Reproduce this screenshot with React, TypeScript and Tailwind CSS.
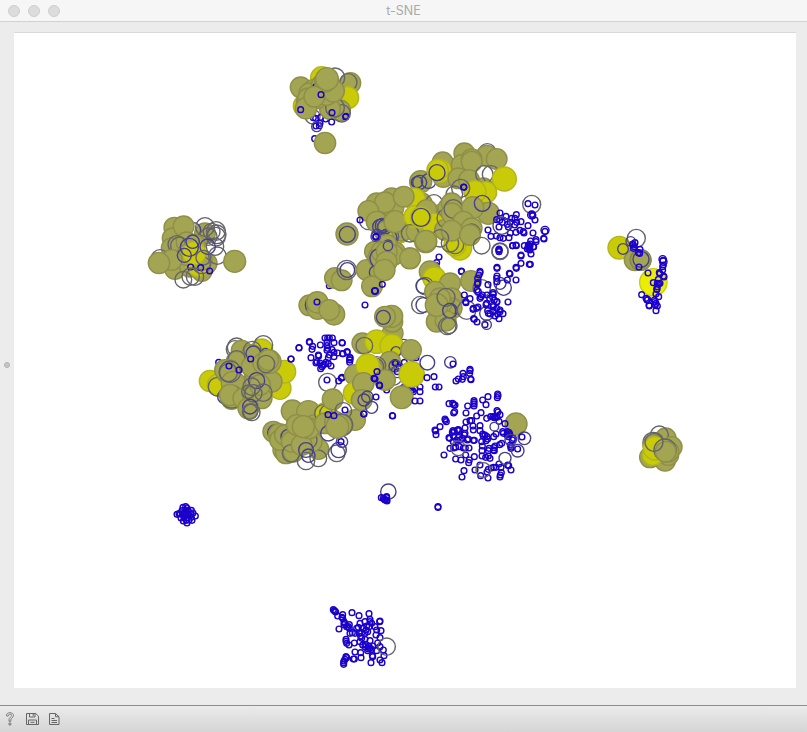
type Kind = 'O' | 'Y' | 'B' | 'g' | 'p' | 'b';

const styles: Record<Kind, { r: number; fill: string; stroke: string }> = {
  O: { r: 31, fill: '#a4a552', stroke: '#8e8f48' },
  Y: { r: 33, fill: '#c9cb08', stroke: '#b2b51c' },
  B: { r: 41, fill: '#ecee00', stroke: '#c9cb18' },
  g: { r: 26, fill: 'none', stroke: '#64646b' },
  p: { r: 22, fill: 'none', stroke: '#45418a' },
  b: { r: 8.6, fill: 'none', stroke: '#1b00cb' },
};

// Each cluster has an origin in canvas pixels; offsets are in thirds of a pixel.
// Every token is "<kind><dx>,<dy>[,<radius>]", painted in order.
const clusters: { x: number; y: number; points: string }[] = [
  { x: 280, y: 55, points: `Y125,68 g98,185,22 b100,188 b107,190 b122,187 b137,192 b120,205 b108,213 b118,212 p110,215,15 b104,251 O211,84 g205,82 g165,68,29 Y203,128 O62,97 Y73,152 O180,166 b197,186 b198,184 g185,175 O150,162 g165,158,28 O100,105 O88,115 O110,130 O80,140 b85,152 O85,130 O120,110 O78,160,32 b62,164 O125,90 O150,95 O140,120 O160,108,33 b108,95 O135,80 O103,125 O141,72,34 b123,119 b156,173 b155,201 O135,264,32` },
  { x: 140, y: 205, points: `O103,68 O195,85 p160,75 g195,66,28 g215,80,25 g228,78,28 g230,88,28 g228,95,28 g205,95 O98,100 O131,64 O95,130 O140,112 g110,118 g118,122 g60,160 O105,192 O150,185 O185,198 O200,175 Y175,182 O185,165 g185,180 g232,152 g225,125 O140,150 O165,120 Y162,145,35 p158,110,20 O95,165 O57,174,32 p148,127,27 p133,151,21 p203,125,23 g190,158,22 b152,186 b182,188 b209,198 g130,224,25 g152,215 g165,215 O284,169,33` },
  { x: 325, y: 135, points: `O66,297,33 p67,298,24 O287,140,33 p276,142,17 p284,142,21 p311,138,22 O290,205 O200,190 O160,215 O205,220 O155,205 O180,202 g130,258 O130,228 Y268,192 O236,185 b105,255 O155,260 O180,290 Y225,290 O240,280 O232,285,33 g195,305 p165,275,22 p173,272 p180,275 p157,300,17 p188,310,28 O210,260,33 O150,350 O175,355 O210,352 O255,370 O185,330 b189,329 p189,329,14 b153,304 b153,306 p152,305,14 O310,235 O275,290 Y270,245 g255,295 Y325,275 Y290,248 p289,247,27 O302,320,33` },
  { x: 420, y: 135, points: `O68,82 O70,126 Y61,108,34 Y53,105,32 p51,113,24 O133,55 g202,52 O200,62 O125,90 O155,73 O115,130 O155,80 O230,72 O190,160 O147,135 g193,118,26 g213,118,26 Y253,132,36 Y198,172,32 Y165,170 g103,178,25 g122,160,27 b131,156 b132,157 O205,235,33 O60,240 g42,205 O20,225 Y42,270,35 Y3,245,30 p3,247,27 O75,285 O85,220 O95,205 g80,250,29 O95,235 g100,222,28 O158,218,33 p187,205,24 O130,260 O155,280 g155,292,25 Y120,340,35 Y105,330 g90,325 g105,330 O95,287 O150,300 g60,310 O18,318,32 g185,332,25 g335,208,27 b324,206 b345,210 b240,234 b258,244 b289,239 b285,250 b275,250 b270,262 b290,262 b303,260 b324,272 b239,256 b230,254 b262,268 b284,270 b247,262 b265,276 b237,276 b204,285 b213,304 b229,303 b240,308 b250,310 b267,308 b271,294 b288,292 b300,286 b310,290 b312,294 b339,294 b375,286,12 b375,289 b371,310 b372,312 b348,314 b332,318 b325,330 b325,336 b340,336 b322,342 b330,345 b278,332 b289,332 b303,360 b336,238 b338,242 b335,240,12 b345,255 p245,272,26 p240,348,24 b237,345 b237,350` },
  { x: 340, y: 325, points: `b193,112 b218,100 b228,98 p190,65 O158,25 O157,-10` },
  { x: 295, y: 245, points: `b103,122 O120,99 O140,106 g155,75,29 p157,75,22 O215,75 O250,37 O260,20 O295,30 p255,40,30 O275,20 O345,40 O275,50 p243,82,20 O231,124 b262,118 O268,75,32 p279,3,14 b240,138 b240,138,10 b210,180 O43,181 p60,180,29 O68,192 O67,172,32 b66,171 O117,208,32 O103,195 O290,214,33 O270,215 p265,217,21` },
  { x: 405, y: 240, points: `g285,35,24 b282,27 b282,31 b102,51 b95,68 b92,76 b169,93 b170,95 b225,94 b225,98 O75,95,32 Y88,115,34 g60,138 p55,138,22 O135,130 O198,123 O90,155 O140,175 g46,195 p55,195 O140,205 O110,190 p130,212 O95,245 O95,195 O105,175 O122,242 O95,195,34 g123,172,27 p135,212,22 g127,258,26 g132,257,24 g185,210,28 p245,220,21 p296,143,23 p285,130,18 g230,145 b276,82 b276,85 b249,134 b218,115 b218,128 b217,132 b216,150 b220,155 b222,105 b276,108 b275,115 b276,125 b307,120 b313,100 b315,102 b333,82 b334,85 b333,120 b348,48 b348,70 b373,73 b376,73 b378,42 b323,17 b333,15 b358,17 b370,20 b375,18 b375,12 b386,20 b393,5 b372,25 b178,165 b182,185 b183,188 b195,176 b205,205 b204,208 b215,205 b219,201 b216,246 b206,236 b208,238 b240,254 p245,254,14 b282,236 b309,186 b276,185 b275,186 b264,158 b265,163 b246,165 b254,175 b232,165 b228,170 b225,175 b245,190 b243,194 b265,195 b265,200 b248,212 b250,220 b255,222 b265,215 b275,205 b285,210 b285,215 b278,222 b270,228 b294,221 b263,172 b268,180` },
  { x: 190, y: 330, points: `Y215,60 g220,45,28 g140,52,28 g135,58 O155,62 b86,97 O185,75 g187,60 p190,70 Y60,153,32 Y85,165 g83,170,28 p105,200 Y270,175 Y283,125,34 O245,155 O140,95 g140,88 O160,170 O115,125,36 O105,120 O195,130 p226,65,10 O185,110 O220,100 O238,95,35 O235,90 g228,102,26 O130,160,36 g115,128,27 g120,125,32 O125,207 g125,200,34 O120,195,32 O160,205 O190,200 O215,205 O210,165 g185,170 O175,235 p200,152,24 g220,188,26 g175,185,20 g190,190,26 p180,230,22 g185,247,25 g180,245,23 b117,108 b147,120 b182,87 b303,87 b327,53` },
  { x: 260, y: 325, points: `b117,69 b148,50 b149,52 b158,64 b156,73 b93,102 b153,98 b175,90 b176,93 b181,60 b195,39 b203,39 b208,39 b217,39 b222,53 b246,53 b201,52 b201,62 b203,70 b201,76 b216,74 b222,82 b233,84 b249,86 b261,80 b222,95 b208,90 b205,98 b270,98 b269,104 b269,112 b171,110 b168,114 b180,114 b193,118 b189,121 b205,116 b213,123 b182,131 b186,125 b198,112 g203,172,27 b201,165 b246,157 b244,160 b236,168 O40,320 p45,322 O58,328,32 O97,258,33 O145,262,35 O70,375 O78,385 O100,380 O60,345 O75,330 p85,335 O175,372 g175,400,25 O95,350 g93,385 O165,300 O155,350 g145,345 O125,360 O148,310 O110,300 Y198,265 g190,265 g205,265 O195,295 p138,375,22 p145,392,20 g138,408,26 O130,305,33 O218,223 O225,290 p205,325,23 g230,385,25 p236,375,23 O285,285 g250,258,25 O245,300 g245,300,33 p246,350,17 b243,350 O232,305,34 b204,269 b222,272 b255,255` },
  { x: 340, y: 325, points: `b7,54 b6,158 b8,86 b22,82 b30,98 b30,105 O67,55 Y110,50,35 Y155,63,35 p168,80,15 g73,62,25 O150,110 g110,122,27 O213,75 b165,113 b167,115 p165,123,18 b172,140 b178,128 p172,140,18 O45,150 O100,135 g105,125 Y83,122,35 b190,188 b205,195 b212,197 b217,195 b225,190 b220,200 b240,186 b240,200 g160,155 b140,195 O135,165 Y43,205 O185,217,34 O70,175,32 O65,225 p72,225,18 p82,215,17 p95,247,18 Y215,148,38 b111,140 b102,160 b105,162 b118,180 b119,182 b108,216 b72,267 b71,267 b157,272 b158,273 p262,113,22 p331,112,17 b339,117 b390,133 b390,137 b369,145 b370,155 b367,163 b392,162 b393,164 b348,168 b355,162 b282,155 b261,158 b286,186 b297,186 b225,228 b240,228 b389,145` },
  { x: 425, y: 380, points: `O273,132,33 b72,71 b83,70 b86,74 b90,75 b89,95 b86,99 b60,117 b61,121 b64,125 b45,140 b30,150 b32,153 b33,164 b147,62 b147,67 b147,72 b147,78 b128,78 b123,99 b173,60 b189,50 b183,74 b218,42 b219,47 b217,53 b168,98 b155,108 b216,92 b219,96 b225,104 b185,115 b197,110 b204,110 b210,110 b208,113 b216,112 b123,126 b135,122 b140,122 b222,124 b240,131 b120,144 b144,138 b165,137 b165,152 b145,150 b84,152 b88,155 b97,150 b100,149 b102,152 b82,157 b72,173 b74,175 b85,168 b101,172 b106,180 b95,180 b118,165 b120,160 b127,180 b130,177 b145,181 b148,181 b112,175 b85,185 b173,162 b175,168 b180,165 b186,170 b188,177 b183,182 b170,185 b172,198 b206,170 b213,162 b233,155 b235,160 b247,155 b252,158 b254,162 b246,165 b250,170 b262,180 b265,175 b256,195 b258,200 b258,205 b230,190 b224,194 b210,198 b207,203 b206,210 b208,212 b192,205 b190,212 b171,212 b171,228 b182,232 b190,228 b195,235 b75,205 b86,204 b92,202 b103,200 b115,204 b121,204 b132,204 b57,225 b92,237 b108,240 b122,225 b133,240 b131,248 b148,230 b117,272 b111,291 b150,270 b165,255 b167,287 b186,276 b190,268 b189,294 b199,264 b206,262 b213,262 b222,252 b228,262 b226,285 b229,278 b225,291 b251,257 b248,255 b258,270 p208,140,13 g100,205,22 p298,175,19 b291,171 p278,212,19 b278,207 p240,235,18 g175,270,22 p257,180,17` },
  { x: 600, y: 220, points: `Y58,83,34 g109,55,27 p92,64,14 O105,120,32 g122,120,31 O122,120,30 p123,118,24 p69,87,16 b105,68 b98,72 b100,75 b103,80 b100,85 b115,98 b119,100 b120,88 b117,141 B160,187 b144,159 b188,118,11 b189,121 b190,125,11 b190,135 b188,140 b188,150 b178,158 b180,161 b191,168 b192,171 b175,178 b160,188 b172,190 b176,192 b180,190 b172,200 b170,208 b171,208 b168,222 b176,230 b125,224 b138,235 b143,238 b141,240 b147,256 b148,258 b163,240 b165,245 b168,250 b166,255 b172,258 b168,272 O197,655 g178,645,27 O215,681 O150,712 O195,722 O205,705 g160,668,31 O160,675 g160,690,29 Y158,705,31 Y165,685,35 O205,695 g195,690,33 O197,695,31 g162,667,27` },
  { x: 320, y: 480, points: `p205,35,23 b184,53 b190,55 b193,58 b200,50 b200,53 b200,60 b201,63 b195,60 b354,80 b354,82 b40,389 b43,392 b45,394 b47,396 b53,408 b68,404 b66,412 b68,415 b57,447 b72,425 b74,430 b72,434 b88,434 b85,440 b88,445 b80,440 b96,398 b117,407 b147,401 b150,418 b180,423 b179,425 b150,425 b135,425 b120,430 b110,445 b115,442 b130,445 b140,438 b147,440 b155,430 b165,440 b170,450 b183,452 b97,458 b90,460 b105,460 b118,460 b125,458 b135,460 b143,455 b138,450 b168,465 b180,473 b150,482 b135,478 b125,475 b122,470 b78,478 b78,484 b80,490 b87,495 b103,489 b120,485 b128,495 b137,493 b135,500 b147,498 b145,507 b143,512 b155,508 b150,505 b158,498 b173,489 b180,500 b190,510 b192,527 b170,512 b180,540 b186,548 b153,548 b157,527 b158,530 b123,533 b105,516 b122,518 b100,537 b103,537 b78,530 b80,533 b75,538 b72,543 b71,548 b71,553 g200,500,26` },
  { x: 170, y: 500, points: `b21,43 b27,41 b39,22 b47,20 b51,24 b36,32 b47,31 b55,33 b64,31 b31,42 b39,44 b46,39 b54,42 b63,42 b69,39 b76,48 b33,54 b42,52 b52,53 b64,52 b40,63 b49,61 b57,60 b51,69 b66,61` },
];

function Scatter() {
  return (
    <svg className="block h-full w-full" viewBox="14 33 782 655" aria-label="t-SNE scatter plot">
      {clusters.map((cluster, i) => (
        <g key={i}>
          {cluster.points.split(' ').map((token, j) => {
            const style = styles[token[0] as Kind];
            const [dx, dy, r = style.r] = token.slice(1).split(',').map(Number);
            return (
              <circle
                key={j}
                cx={cluster.x + dx / 3}
                cy={cluster.y + dy / 3}
                r={r / 3}
                fill={style.fill}
                stroke={style.stroke}
                strokeWidth={1.4}
              />
            );
          })}
        </g>
      ))}
    </svg>
  );
}

export default function App() {
  return (
    <div className="flex h-[732px] w-[807px] flex-col overflow-hidden bg-[#ececec] font-['Inter','Liberation_Sans',sans-serif]">
      <header className="grid h-[22px] shrink-0 grid-cols-[1fr_auto_1fr] items-center border-b border-[#d1d1d1] bg-[#f6f6f6]">
        <div className="flex gap-2 pl-2">
          <i className="size-3 rounded-full border border-[#cecece] bg-[#dcdcdc]" />
          <i className="size-3 rounded-full border border-[#cecece] bg-[#dcdcdc]" />
          <i className="size-3 rounded-full border border-[#cecece] bg-[#dcdcdc]" />
        </div>
        <h1 className="pt-px text-[12.5px] leading-5 text-[#aaaaaa]">t-SNE</h1>
      </header>
      <main className="flex min-h-0 flex-1 pt-[10px] pr-[11px] pb-[17px]">
        <div className="flex w-[14px] shrink-0 items-center justify-center pt-[10px]">
          <i className="size-[6px] rounded-full border border-[#b3b3b3] bg-[#c6c6c6]" />
        </div>
        <section className="min-w-0 flex-1 border-t border-[#d9d9d9] bg-white">
          <Scatter />
        </section>
      </main>
      <footer className="flex h-[27px] shrink-0 items-center gap-[9px] border-t border-[#8e8e8e] bg-linear-to-b from-[#ebebeb] to-[#d5d5d5] pl-1 text-[#666666]">
        <svg className="h-[14px] w-[13px]" viewBox="0 0 13 14" fill="none" stroke="currentColor">
          <path d="M2.500 4V3.200C2.500 1.600 4 .7 5.800.7S9.500 1.600 9.500 3.500C9.500 5.800 6.800 6 6.800 8v1.300H5V7.500c0-2 2.600-2.400 2.600-4C7.600 2.500 7 2.200 6 2.200S4.300 2.800 4.300 4ZM5 11h1.800v2H5z" strokeWidth=".8" />
        </svg>
        <svg className="h-[14px] w-[13px]" viewBox="0 0 13 14" fill="none" stroke="currentColor" strokeWidth="1">
          <path d="M.5 1.500h9.300l2.700 2.700v8.300H.5zM3.500 1.500v3.500h5.500V1.500M7.200 2v2M2.500 12.500V8h8v4.500M4.500 10.300h4" />
        </svg>
        <svg className="h-[14px] w-[13px]" viewBox="0 0 13 14" fill="none" stroke="currentColor" strokeWidth="1">
          <path d="M1.500 1.500h6l3.500 3.200V12.500H1.500zM7.500 1.500v3.200h3.500M3.500 6.500h3M3.500 8.500h5.500M3.500 10.500h5.500" />
        </svg>
      </footer>
    </div>
  );
}
